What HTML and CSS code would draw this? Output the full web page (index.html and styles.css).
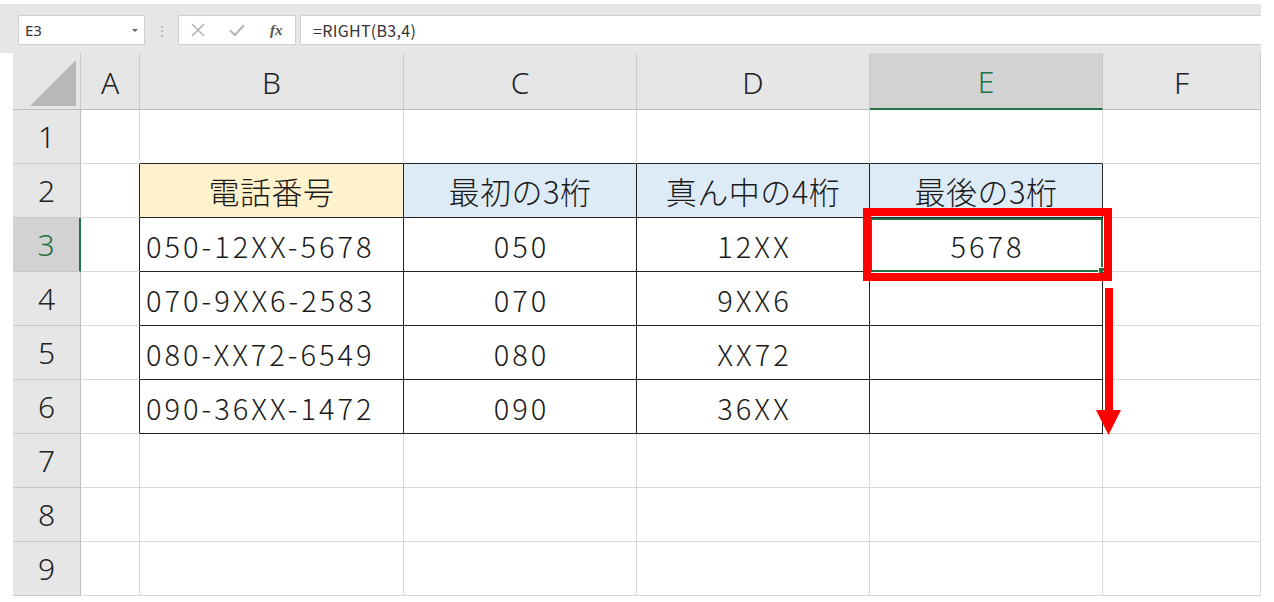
FILE: index.html
```html
<!DOCTYPE html>
<html lang="ja">
<head>
<meta charset="utf-8">
<link rel="stylesheet" href="styles.css">
</head>
<body>
<div class="toolbar">
  <div class="namebox"><span class="name">E3</span><span class="dd"></span></div>
  <div class="grip">⋮</div>
  <div class="btns">
    <svg class="ic" width="16" height="16" viewBox="0 0 16 16"><path d="M2 2L14 14M14 2L2 14" stroke="#b4b4b4" stroke-width="1.6" fill="none"/></svg>
    <svg class="ic" width="18" height="16" viewBox="0 0 18 16"><path d="M2 8.5L7 13L16 3" stroke="#b4b4b4" stroke-width="2" fill="none"/></svg>
    <span class="fx">fx</span>
  </div>
  <div class="formula">=RIGHT(B3,4)</div>
</div>
<div class="sheet">
  <div class="corner"><svg width="48" height="48" viewBox="0 0 48 48"><path d="M46 1L46 47L0 47Z" fill="#b8b8b8"/></svg></div>
  <div class="ch">A</div><div class="ch">B</div><div class="ch">C</div><div class="ch">D</div><div class="ch sel">E</div><div class="ch">F</div>

  <div class="rh">1</div><div class="c"></div><div class="c tt"></div><div class="c tt"></div><div class="c tt"></div><div class="c tt"></div><div class="c"></div>

  <div class="rh">2</div><div class="c tl"></div><div class="c t hd hy">電話番号</div><div class="c t hd hb">最初の3桁</div><div class="c t hd hb">真ん中の4桁</div><div class="c t hd hb">最後の3桁</div><div class="c"></div>

  <div class="rh rsel">3</div><div class="c tl"></div><div class="c t n l">050-12XX-5678</div><div class="c t n">050</div><div class="c t n">12XX</div><div class="c t n active">5678<span class="handle"></span></div><div class="c"></div>

  <div class="rh">4</div><div class="c tl"></div><div class="c t n l">070-9XX6-2583</div><div class="c t n">070</div><div class="c t n">9XX6</div><div class="c t"></div><div class="c"></div>

  <div class="rh">5</div><div class="c tl"></div><div class="c t n l">080-XX72-6549</div><div class="c t n">080</div><div class="c t n">XX72</div><div class="c t"></div><div class="c"></div>

  <div class="rh">6</div><div class="c tl"></div><div class="c t n l">090-36XX-1472</div><div class="c t n">090</div><div class="c t n">36XX</div><div class="c t"></div><div class="c"></div>

  <div class="rh">7</div><div class="c"></div><div class="c"></div><div class="c"></div><div class="c"></div><div class="c"></div><div class="c"></div>
  <div class="rh">8</div><div class="c"></div><div class="c"></div><div class="c"></div><div class="c"></div><div class="c"></div><div class="c"></div>
  <div class="rh">9</div><div class="c"></div><div class="c"></div><div class="c"></div><div class="c"></div><div class="c"></div><div class="c"></div>

  <div class="redbox"></div>
  <svg class="arrow" width="26" height="148" viewBox="0 0 26 148"><rect x="9" y="0" width="8" height="126" fill="#ff0000"/><path d="M0 122L25 122L12.5 147Z" fill="#ff0000"/></svg>
</div>
</body>
</html>
```
FILE: styles.css
```css
html, body {
  margin: 0;
  padding: 0;
  background: #ffffff;
}
body {
  width: 1274px;
  height: 602px;
  overflow: hidden;
  font-family: "Noto Sans CJK JP", "Noto Sans", sans-serif;
}
.toolbar {
  margin-top: 4px;
  width: 1261px;
  height: 49px;
  background: #e6e6e6;
  display: flex;
  align-items: flex-start;
  padding-top: 11px;
  box-sizing: border-box;
}
.namebox {
  margin-left: 18px;
  width: 127px;
  height: 30px;
  background: #fff;
  border: 1px solid #d0d0d0;
  box-sizing: border-box;
  display: flex;
  align-items: center;
  justify-content: space-between;
  padding: 0 6px 0 6px;
}
.name {
  font-family: "Noto Sans", sans-serif;
  font-size: 15px;
  color: #333;
}
.dd {
  width: 0;
  height: 0;
  border-left: 3px solid transparent;
  border-right: 3px solid transparent;
  border-top: 3px solid #666;
}
.grip {
  width: 33px;
  text-align: center;
  color: #b0b0b0;
  font-size: 14px;
  line-height: 30px;
}
.btns {
  width: 118px;
  height: 30px;
  background: #fff;
  border: 1px solid #d0d0d0;
  box-sizing: border-box;
  display: flex;
  align-items: center;
  padding-left: 11px;
  gap: 22px;
}
.fx {
  font-family: "Liberation Serif", serif;
  font-style: italic;
  font-weight: bold;
  font-size: 15px;
  color: #555;
  margin-left: 2px;
}
.formula {
  margin-left: 4px;
  flex: 1;
  height: 30px;
  background: #fff;
  border: 1px solid #d0d0d0;
  border-right: none;
  box-sizing: border-box;
  font-family: "Noto Sans CJK JP", sans-serif;
  font-size: 16px;
  letter-spacing: 0.3px;
  color: #333;
  line-height: 28px;
  padding-left: 12px;
}
.sheet {
  position: relative;
  margin-left: 13px;
  width: 1248px;
  display: grid;
  grid-template-columns: 68px 59px 264px 233px 233px 233px 158px;
  grid-template-rows: 57px repeat(9, 54px);
}
.corner {
  background: #e6e6e6;
  border-right: 1px solid #c8c8c8;
  border-bottom: 1px solid #bdbdbd;
  display: flex;
  align-items: flex-end;
  justify-content: flex-end;
  padding: 0 2px 2px 0;
}
.ch {
  background: #e6e6e6;
  border-right: 1px solid #c8c8c8;
  border-bottom: 1px solid #bdbdbd;
  display: flex;
  align-items: center;
  justify-content: center;
  font-family: "Noto Sans", sans-serif;
  font-weight: 300;
  font-size: 30px;
  color: #222;
  padding-top: 2px;
}
.ch.sel {
  background: #d2d2d2;
  color: #217346;
  border-bottom: 2px solid #217346;
}
.rh {
  background: #e6e6e6;
  border-right: 1px solid #bdbdbd;
  border-bottom: 1px solid #c8c8c8;
  display: flex;
  align-items: center;
  justify-content: center;
  font-family: "Noto Sans", sans-serif;
  font-weight: 300;
  font-size: 30px;
  color: #222;
}
.rh.rsel {
  background: #d2d2d2;
  color: #217346;
  border-right: 2px solid #217346;
}
.c {
  border-right: 1px solid #d9d9d9;
  border-bottom: 1px solid #d9d9d9;
  display: flex;
  align-items: center;
  justify-content: center;
  color: #1a1a1a;
  position: relative;
}
.c.hd {
  font-size: 31px;
  font-weight: 300;
  letter-spacing: 0.5px;
  padding-bottom: 1px;
}
.c.n {
  font-size: 29px;
  font-weight: 300;
  letter-spacing: 3px;
  padding-left: 3px;
}
.c.tt {
  border-bottom-color: #222;
}
.c.tl {
  border-right-color: #222;
}
.c.t {
  border-right-color: #222;
  border-bottom-color: #222;
}
.c.l {
  justify-content: flex-start;
  padding-left: 6px;
}
.c.hy {
  background: #fff2cc;
}
.c.hb {
  background: #ddebf7;
}
.c.active {
  outline: 2px solid #217346;
  outline-offset: -2px;
}
.handle {
  position: absolute;
  right: -3px;
  bottom: -3px;
  width: 5px;
  height: 5px;
  background: #217346;
  border: 1px solid #fff;
}
.redbox {
  position: absolute;
  left: 850px;
  top: 155px;
  width: 249px;
  height: 73px;
  border: 8px solid #ff0000;
  box-sizing: border-box;
}
.arrow {
  position: absolute;
  left: 1083px;
  top: 235px;
}
```
